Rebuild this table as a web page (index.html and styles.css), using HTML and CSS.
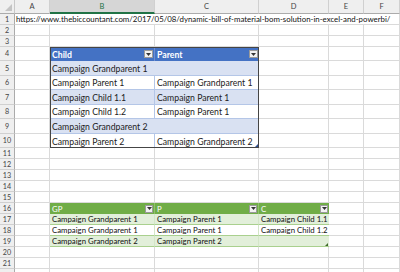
FILE: index.html
```html
<!DOCTYPE html>
<html>
<head>
<meta charset="utf-8">
<link rel="stylesheet" href="styles.css">
</head>
<body>
<div class="sheet">
  <div class="corner"><span class="tri"></span></div>
  <div class="ch">A</div><div class="ch sel">B</div><div class="ch">C</div><div class="ch">D</div><div class="ch">E</div><div class="ch">F</div>

  <div class="rh">1</div><div class="c url">https://www.thebiccountant.com/2017/05/08/dynamic-bill-of-material-bom-solution-in-excel-and-powerbi/</div>
  <div class="rh">2</div><div class="c"></div><div class="c"></div><div class="c"></div><div class="c"></div><div class="c"></div><div class="c"></div>
  <div class="rh">3</div><div class="c"></div><div class="c"></div><div class="c"></div><div class="c"></div><div class="c"></div><div class="c"></div>

  <div class="rh">4</div><div class="c"></div><div class="c"></div><div class="c"></div><div class="c"></div>
  <div class="rh">5</div><div class="c"></div><div class="c"></div><div class="c"></div><div class="c"></div>
  <div class="rh">6</div><div class="c"></div><div class="c"></div><div class="c"></div><div class="c"></div>
  <div class="rh">7</div><div class="c"></div><div class="c"></div><div class="c"></div><div class="c"></div>
  <div class="rh">8</div><div class="c"></div><div class="c"></div><div class="c"></div><div class="c"></div>
  <div class="rh">9</div><div class="c"></div><div class="c"></div><div class="c"></div><div class="c"></div>
  <div class="rh">10</div><div class="c"></div><div class="c"></div><div class="c"></div><div class="c"></div>

  <div class="rh">11</div><div class="c"></div><div class="c"></div><div class="c"></div><div class="c"></div><div class="c"></div><div class="c"></div>
  <div class="rh">12</div><div class="c"></div><div class="c"></div><div class="c"></div><div class="c"></div><div class="c"></div><div class="c"></div>
  <div class="rh">13</div><div class="c"></div><div class="c"></div><div class="c"></div><div class="c"></div><div class="c"></div><div class="c"></div>
  <div class="rh">14</div><div class="c"></div><div class="c"></div><div class="c"></div><div class="c"></div><div class="c"></div><div class="c"></div>
  <div class="rh">15</div><div class="c"></div><div class="c"></div><div class="c"></div><div class="c"></div><div class="c"></div><div class="c"></div>

  <div class="rh">16</div><div class="c"></div><div class="c"></div><div class="c"></div>
  <div class="rh">17</div><div class="c"></div><div class="c"></div><div class="c"></div>
  <div class="rh">18</div><div class="c"></div><div class="c"></div><div class="c"></div>
  <div class="rh">19</div><div class="c"></div><div class="c"></div><div class="c"></div>

  <div class="rh">20</div><div class="c"></div><div class="c"></div><div class="c"></div><div class="c"></div><div class="c"></div><div class="c"></div>
  <div class="rh">21</div><div class="c"></div><div class="c"></div><div class="c"></div><div class="c"></div><div class="c"></div><div class="c"></div>
  <div class="rh"></div><div class="c"></div><div class="c"></div><div class="c"></div><div class="c"></div><div class="c"></div><div class="c"></div>

  <div class="tbl blue">
    <div class="th sep">Child<span class="dd"><svg width="5" height="3" viewBox="0 0 5 3"><path d="M0 0H5L2.5 3Z" fill="#333"/></svg></span></div>
    <div class="th">Parent<span class="dd"><svg width="5" height="3" viewBox="0 0 5 3"><path d="M0 0H5L2.5 3Z" fill="#333"/></svg></span></div>
    <div class="td band wide">Campaign Grandparent 1</div>
    <div class="td sep">Campaign Parent 1</div><div class="td">Campaign Grandparent 1</div>
    <div class="td band sep">Campaign Child 1.1</div><div class="td band">Campaign Parent 1</div>
    <div class="td sep">Campaign Child 1.2</div><div class="td">Campaign Parent 1</div>
    <div class="td band wide">Campaign Grandparent 2</div>
    <div class="td sep last">Campaign Parent 2</div><div class="td last">Campaign Grandparent 2</div>
    <span class="grip"></span>
  </div>

  <div class="tbl green">
    <div class="th sep">GP<span class="dd"><svg width="5" height="3" viewBox="0 0 5 3"><path d="M0 0H5L2.5 3Z" fill="#333"/></svg></span></div>
    <div class="th sep">P<span class="dd"><svg width="5" height="3" viewBox="0 0 5 3"><path d="M0 0H5L2.5 3Z" fill="#333"/></svg></span></div>
    <div class="th">C<span class="dd"><svg width="5" height="3" viewBox="0 0 5 3"><path d="M0 0H5L2.5 3Z" fill="#333"/></svg></span></div>
    <div class="td band sep">Campaign Grandparent 1</div><div class="td band sep">Campaign Parent 1</div><div class="td band">Campaign Child 1.1</div>
    <div class="td sep">Campaign Grandparent 1</div><div class="td sep">Campaign Parent 1</div><div class="td">Campaign Child 1.2</div>
    <div class="td band sep">Campaign Grandparent 2</div><div class="td band sep">Campaign Parent 2</div><div class="td band"></div>
    <span class="grip"></span>
  </div>
</div>
</body>
</html>
```

FILE: styles.css
```css
html, body {
  margin: 0;
  padding: 0;
  background: #ffffff;
  overflow: hidden;
}

.sheet {
  display: grid;
  grid-template-columns: 15px 35px 105px 104px 70px 35px 36px;
  grid-template-rows: 14px repeat(3, 11px) 14px 15px 14px 15px 14px 15px 14px repeat(12, 11px);
  font-family: Lato, "Liberation Sans", sans-serif;
  color: #000;
  width: 400px;
}

.corner {
  background: #efefef;
  border-right: 1px solid #c8c8c8;
  border-bottom: 1px solid #ababab;
  display: flex;
  align-items: flex-end;
  justify-content: flex-end;
  padding: 0 2px 2px 0;
  box-sizing: border-box;
}

.tri {
  width: 0;
  height: 0;
  border-left: 7px solid transparent;
  border-bottom: 7px solid #c4c4c4;
}

.ch {
  background: #efefef;
  border-right: 1px solid #d0d0d0;
  border-bottom: 1px solid #ababab;
  box-sizing: border-box;
  font-size: 7.5px;
  color: #444;
  display: flex;
  align-items: center;
  justify-content: center;
}

.ch.sel {
  background: #d6d6d6;
  color: #217346;
  border-bottom: 2px solid #217346;
}

.rh {
  background: #efefef;
  border-right: 1px solid #ababab;
  border-bottom: 1px solid #d0d0d0;
  box-sizing: border-box;
  font-size: 7.2px;
  color: #444;
  display: flex;
  align-items: center;
  justify-content: center;
}

.c {
  border-right: 1px solid #dadada;
  border-bottom: 1px solid #dadada;
  box-sizing: border-box;
  white-space: nowrap;
}

.url {
  grid-column: span 6;
  font-size: 7.85px;
  line-height: 10px;
  padding-left: 1px;
  color: #111;
}

.tbl {
  display: grid;
  position: relative;
  white-space: nowrap;
}

.tbl .th,
.tbl .td {
  box-sizing: border-box;
  display: flex;
  align-items: center;
  padding-left: 2px;
}

.tbl .th {
  color: #fff;
  font-weight: bold;
  justify-content: space-between;
}

.dd {
  width: 9px;
  height: 8px;
  box-sizing: border-box;
  background: #f2f2f2;
  border: 1px solid #9a9a9a;
  display: flex;
  align-items: center;
  justify-content: center;
  margin-right: 1px;
}

.grip {
  position: absolute;
  right: 1px;
  bottom: 1px;
  width: 0;
  height: 0;
  border-left: 3px solid transparent;
  border-bottom: 3px solid #2f4f8f;
}

/* blue table */
.blue {
  grid-column: 3 / 5;
  grid-row: 5 / 12;
  grid-template-columns: 105px 104px;
  grid-template-rows: 14px 15px 14px 15px 14px 15px 14px;
  outline: 1px solid #454545;
  outline-offset: -1px;
  font-size: 8.7px;
}

.blue .th {
  background: #4472c4;
}

.blue .td {
  color: #222;
  border-bottom: 1px solid #b4c6e7;
}

.blue .td.last {
  border-bottom: none;
}

.blue .band {
  background: #d9e1f2;
}

.blue .sep {
  border-right: 1px solid #b4c6e7;
}

.blue .th.sep {
  border-right: 1px solid #6f8fd0;
}

.blue .wide {
  grid-column: span 2;
}

/* green table */
.green {
  grid-column: 3 / 6;
  grid-row: 17 / 21;
  grid-template-columns: 105px 104px 70px;
  grid-template-rows: repeat(4, 11px);
  font-size: 7.8px;
}

.green .th {
  background: #70ad47;
  font-weight: normal;
}

.green .th.sep {
  border-right: 1px solid #8fc06e;
}

.green .dd {
  width: 8px;
}

.green .td {
  color: #111;
  border-bottom: 1px solid #a9d08e;
}

.green .band {
  background: #e2efda;
}

.green .sep {
  border-right: 1px solid #d4e6c8;
}

.green .grip {
  border-bottom-color: #3f6b2a;
}
```
